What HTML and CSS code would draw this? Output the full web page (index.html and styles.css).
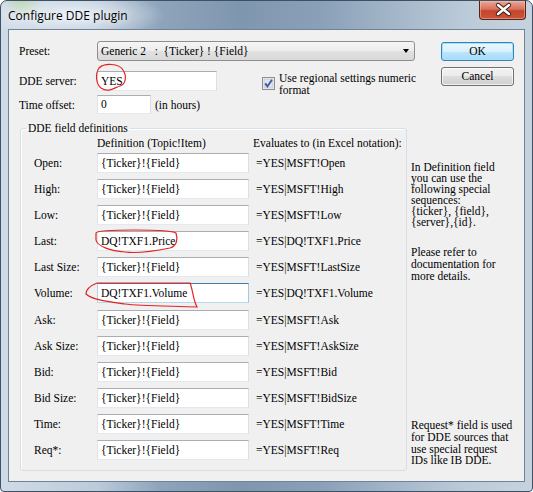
FILE: index.html
```html
<!DOCTYPE html>
<html lang="en">
<head>
    <meta charset="UTF-8">
    <title>Configure DDE plugin</title>
    <link rel="stylesheet" href="styles.css">
</head>
<body>
    <div class="window">
        <div class="titlebar">
            <span class="title">Configure DDE plugin</span>
            <div class="close-btn">
                <svg width="47" height="19" viewBox="0 0 47 19">
                    <path d="M18 5 L29 14 M29 5 L18 14" stroke="#3a1a12" stroke-width="4.2" stroke-linecap="round"/>
                    <path d="M18 5 L29 14 M29 5 L18 14" stroke="#fff" stroke-width="2.4" stroke-linecap="round"/>
                </svg>
            </div>
        </div>

        <div class="client">
            <div class="top">
                <div class="settings">
                    <div class="row">
                        <span class="label">Preset:</span>
                        <div class="combo">
                            <span class="combo-text">Generic 2   :  {Ticker} ! {Field}</span>
                            <span class="combo-arrow"></span>
                        </div>
                    </div>
                    <div class="row row-server">
                        <span class="label">DDE server:</span>
                        <div class="edit edit-server">YES</div>
                        <div class="check">
                            <svg class="check-box" width="13" height="13" viewBox="0 0 13 13">
                                <rect x="0.5" y="0.5" width="12" height="12" fill="#f4f4f4" stroke="#8f8f8f"/>
                                <rect x="2" y="2" width="9" height="9" fill="#dde3ec" stroke="#b8c0cc" stroke-width="0.6"/>
                                <path d="M3.2 6.4 L5.4 9.4 L10 2.8" fill="none" stroke="#3f56a8" stroke-width="1.8"/>
                            </svg>
                            <span>Use regional settings numeric<br>format</span>
                        </div>
                    </div>
                    <div class="row row-offset">
                        <span class="label">Time offset:</span>
                        <div class="edit edit-offset">0</div>
                        <span class="hint">(in hours)</span>
                    </div>
                </div>
                <div class="buttons">
                    <div class="btn btn-default">OK</div>
                    <div class="btn">Cancel</div>
                </div>
            </div>

            <div class="lower">
                <fieldset class="group">
                    <legend>DDE field definitions</legend>
                    <div class="defs-head">
                        <span class="head-def">Definition (Topic!Item)</span>
                        <span class="head-eval">Evaluates to (in Excel notation):</span>
                    </div>
                    <div class="defs">
                        <span class="label">Open:</span><div class="edit">{Ticker}!{Field}</div><span class="eval">=YES|MSFT!Open</span>
                        <span class="label">High:</span><div class="edit">{Ticker}!{Field}</div><span class="eval">=YES|MSFT!High</span>
                        <span class="label">Low:</span><div class="edit">{Ticker}!{Field}</div><span class="eval">=YES|MSFT!Low</span>
                        <span class="label">Last:</span><div class="edit">DQ!TXF1.Price</div><span class="eval">=YES|DQ!TXF1.Price</span>
                        <span class="label">Last Size:</span><div class="edit">{Ticker}!{Field}</div><span class="eval">=YES|MSFT!LastSize</span>
                        <span class="label">Volume:</span><div class="edit edit-focus">DQ!TXF1.Volume</div><span class="eval">=YES|DQ!TXF1.Volume</span>
                        <span class="label">Ask:</span><div class="edit">{Ticker}!{Field}</div><span class="eval">=YES|MSFT!Ask</span>
                        <span class="label">Ask Size:</span><div class="edit">{Ticker}!{Field}</div><span class="eval">=YES|MSFT!AskSize</span>
                        <span class="label">Bid:</span><div class="edit">{Ticker}!{Field}</div><span class="eval">=YES|MSFT!Bid</span>
                        <span class="label">Bid Size:</span><div class="edit">{Ticker}!{Field}</div><span class="eval">=YES|MSFT!BidSize</span>
                        <span class="label">Time:</span><div class="edit">{Ticker}!{Field}</div><span class="eval">=YES|MSFT!Time</span>
                        <span class="label">Req*:</span><div class="edit">{Ticker}!{Field}</div><span class="eval">=YES|MSFT!Req</span>
                    </div>
                </fieldset>
                <div class="notes">
                    <p class="note-seq">In Definition field<br>you can use the<br>following special<br>sequences:<br>{ticker}, {field},<br>{server},{id}.</p>
                    <p class="note-docs">Please refer to<br>documentation for<br>more details.</p>
                    <p class="note-req">Request* field is used<br>for DDE sources that<br>use special request<br>IDs like IB DDE.</p>
                </div>
            </div>
        </div>
    </div>

    <!-- red hand-drawn marks over the screenshot -->
    <svg class="marks" width="533" height="492" viewBox="0 0 533 492">
        <path d="M99 68 C104 63 119 63 123 70 C127 76 126 84 120 86 C114 88 108 93 101 88 C96 84 95 74 99 68 Z"/>
        <path d="M96 233 C98 229 170 229 176 233 C178 239 177 246 170 248 C160 250 140 254 125 252 C110 251 97 246 96 240 Z"/>
        <path d="M97 283 L190 283 C193 290 193 300 197 307 C170 306 140 306 125 304 C110 302 92 300 86 294 C86 288 92 285 97 283 Z"/>
    </svg>
</body>
</html>
```

FILE: styles.css
```css
* { box-sizing: border-box; }
html, body { margin: 0; padding: 0; }
body {
    position: relative; width: 533px; height: 492px; overflow: hidden; background: #fff;
    font-family: "Liberation Serif", "Times New Roman", serif; font-size: 11.5px; color: #000;
}

/* window frame */
.window {
    width: 533px; height: 492px; padding: 0 7px 9px; border: 1px solid #3f5064; border-radius: 7px 7px 4px 4px;
    background:
        radial-gradient(ellipse 95px 22px at 70px 14px, rgba(238, 243, 248, 0.9), rgba(238, 243, 248, 0)),
        radial-gradient(circle at 22px 0, rgba(170, 205, 140, 0.7), rgba(170, 205, 140, 0) 20px),
        linear-gradient(to right, #cfdbe6 0%, #bccbdb 18%, #8ea4bb 30%, #7f96af 45%, #8aa0b8 60%, #a5b8ca 75%, #bccbd9 88%, #c6d3df 100%);
}
.titlebar { height: 28px; display: flex; align-items: flex-start; justify-content: space-between; }
.title {
    margin-top: 7px; font-family: "Open Sans", "DejaVu Sans", sans-serif; font-size: 12px; line-height: 16px;
    text-shadow: 0 0 6px rgba(255, 255, 255, 0.9);
}
.close-btn {
    width: 47px; height: 19px; margin-right: -1px; border: 1px solid #5a2016; border-top: none;
    border-radius: 0 0 4px 4px;
    background: linear-gradient(#e9a898 0%, #d8715d 45%, #c4442c 55%, #c9583a 100%);
    box-shadow: inset 0 0 0 1px rgba(255, 200, 190, 0.45);
}
.close-btn svg { display: block; margin-top: -1px; }

.client { height: 453px; background: #f0f0f0; border: 1px solid #6f8296; padding: 11px 0 0 10px; }

/* top part */
.top { display: flex; align-items: flex-start; }
.row { display: flex; align-items: center; height: 20px; }
.row-server { margin-top: 10px; align-items: flex-start; }
.row-offset { margin-top: 4px; height: 19px; }
.row .label { width: 78px; line-height: 20px; }
.row-offset .label { line-height: 18px; }

.combo {
    width: 318px; height: 20px; display: flex; align-items: center; justify-content: space-between;
    padding: 0 5px 0 3px; border: 1px solid #8e8f8f; border-radius: 3px;
    background: linear-gradient(#f5f5f5, #ececec 50%, #e1e1e1 50%, #d9d9d9);
}
.combo-text { white-space: pre; }
.combo-arrow { width: 0; height: 0; border-left: 3.5px solid transparent; border-right: 3.5px solid transparent; border-top: 4px solid #000; }

.edit {
    height: 20px; padding: 0 3px; line-height: 18px; white-space: pre; background: #fff;
    border: 1px solid; border-color: #abadb3 #dbdfe6 #e3e9ef #e2e3ea;
}
.edit-focus { border-color: #3d7bad #a4c9e3 #b7d9ed #b5cfe7; }
.edit-server { width: 120px; }
.edit-offset { width: 54px; height: 19px; line-height: 17px; }
.hint { margin-left: 4px; }

.check { display: flex; align-items: flex-start; margin: 1px 0 0 45px; line-height: 12px; }
.check-box { flex: none; margin: 5px 4px 0 0; }

.buttons { margin: 1px 0 0 25px; display: flex; flex-direction: column; gap: 6px; }
.btn {
    width: 73px; height: 19px; line-height: 17px; text-align: center; border: 1px solid #707070; border-radius: 3px;
    background: linear-gradient(#f2f2f2, #ebebeb 50%, #dddddd 50%, #cfcfcf);
    box-shadow: inset 0 0 0 1px rgba(255, 255, 255, 0.7);
}
.btn-default {
    border-color: #3c7fb1;
    background: linear-gradient(#eaf6fd, #d9f0fc 50%, #bee6fd 50%, #a7d9f5);
    box-shadow: inset 0 0 0 1px #9ee3ff;
}

/* field definitions */
.lower { display: flex; margin: 7px 0 0 1px; height: 350px; }
.group {
    flex: none; width: 387px; margin: 0; padding: 2px 0 10px 13px; min-inline-size: 0;
    border: 1px solid #d5dfe5; border-radius: 3px; box-shadow: inset 1px 1px 0 #fff;
}
.group legend { margin-left: -8px; padding: 0 2px; line-height: 14px; }
.defs-head { display: flex; height: 13px; line-height: 13px; white-space: nowrap; }
.head-def { margin-left: 63px; width: 156px; }
.defs {
    display: grid; grid-template-columns: 63px 152px auto; grid-auto-rows: 20px; row-gap: 6.1px;
    margin-top: 3px; align-items: center;
}
.eval { margin-left: 7px; white-space: nowrap; }

.notes { flex: none; margin-left: 4px; width: 112px; display: flex; flex-direction: column; padding: 41px 0 4px; }
.notes p { margin: 0; }
.note-seq { line-height: 11px; }
.note-docs { margin-top: 18px !important; line-height: 12px; }
.note-req { margin-top: auto !important; line-height: 11.7px; }

/* annotation overlay */
.marks { position: absolute; top: 0; left: 0; pointer-events: none; }
.marks path { fill: none; stroke: #e42222; stroke-width: 1.2; }
```
